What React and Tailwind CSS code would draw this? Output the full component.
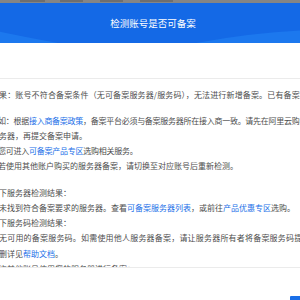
import React from "react";

const L = ({ children }) => <span className="text-[#1a6fe8]">{children}</span>;

const Line = ({ children, className = "" }) => (
  <div className={"h-[15px] leading-[15px] whitespace-nowrap " + className}>{children}</div>
);

const Line2 = ({ children, className = "" }) => (
  <div className={"h-[15.3px] leading-[15.3px] whitespace-nowrap " + className}>{children}</div>
);

export default function App() {
  return (
    <div
      className="w-[300px] h-[300px] overflow-hidden bg-white flex flex-col relative"
      style={{ fontFamily: '"Noto Sans CJK SC", "Noto Sans", sans-serif' }}
    >
      <div className="h-[3px] bg-[#858585] flex shrink-0">
        <span className="ml-[20px] w-[25px] h-[2px] bg-[#6e6e6e]" />
        <span className="ml-[15px] w-[23px] h-[2px] bg-[#6e6e6e]" />
        <span className="ml-[17px] w-[23px] h-[2px] bg-[#6e6e6e]" />
        <span className="ml-[17px] w-[33px] h-[2px] bg-[#6e6e6e]" />
      </div>
      <div className="h-[40px] shrink-0 relative bg-[#1469e6] flex items-center justify-center pl-[6px]">
        <svg className="absolute left-0 top-0" width="300" height="40" viewBox="0 0 300 40">
          <path d="M0 28.7 Q25 34 58 40 L0 40 Z" fill="#1c78ee" />
          <path d="M196 40 Q250 30 300 27.5 L300 40 Z" fill="#1c78ee" />
        </svg>
        <span className="relative text-white text-[9.5px]">检测账号是否可备案</span>
      </div>
      <div className="h-[36px] shrink-0 border-b border-[#ebebeb]" />
      <div className="flex-1 overflow-hidden text-[8px] text-[#4d4d4d] pt-[8px]">
        <Line className="-ml-[1px] tracking-[0.15px]">果：账号不符合备案条件（无可备案服务器/服务码），无法进行新增备案。已有备案的账号</Line>
        <div className="h-[10.5px]" />
        <Line className="-ml-[2px] tracking-[-0.27px]">
          如：根据<L>接入商备案政策</L>，备案平台必须与备案服务器所在接入商一致。请先在阿里云购买服
        </Line>
        <Line className="-ml-[1px]">务器，再提交备案申请。</Line>
        <Line className="-ml-[2px] tracking-[-0.25px]">
          您可进入<L>可备案产品专区</L>选购相关服务。
        </Line>
        <Line className="-ml-[2px]">若使用其他账户购买的服务器备案，请切换至对应账号后重新检测。</Line>
        <div className="h-[12px]" />
        <Line2 className="-ml-[1px]">下服务器检测结果：</Line2>
        <Line2 className="-ml-[1px]">
          未找到符合备案要求的服务器。查看<L>可备案服务器列表</L>，或前往<L>产品优惠专区</L>选购。
        </Line2>
        <Line2 className="-ml-[1px]">下服务码检测结果：</Line2>
        <Line2 className="-ml-[1px] tracking-[0.2px]">无可用的备案服务码。如需使用他人服务器备案，请让服务器所有者将备案服务码提供给您</Line2>
        <Line2 className="-ml-[1px]">
          删详见<L>帮助文档</L>。
        </Line2>
        <Line2 className="-ml-[1px]">许其他账号使用您的服务器进行备案：</Line2>
      </div>
      <div className="h-[33px] shrink-0 border-t border-[#ebebeb] bg-white flex">
        <div className="ml-auto mt-[28px] w-[10px] h-[10px] rounded-tl-[1px] bg-[#1a6fe8]" />
      </div>
    </div>
  );
}
